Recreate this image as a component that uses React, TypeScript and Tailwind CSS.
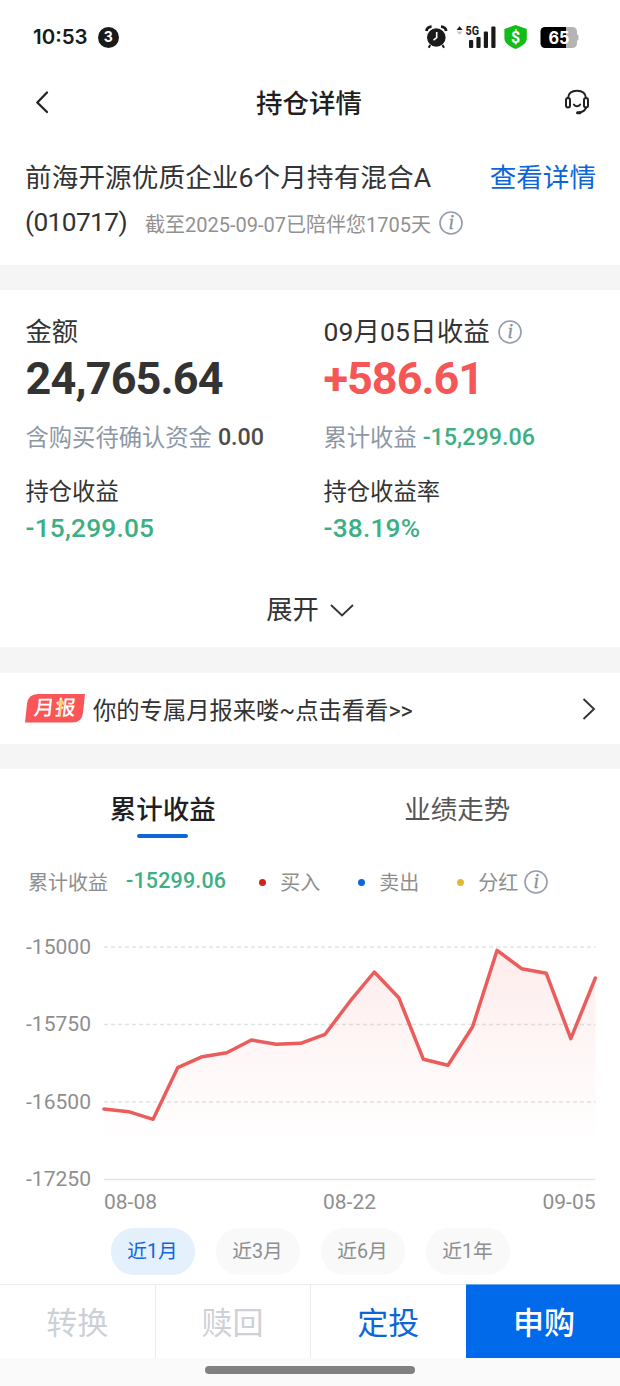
import React from 'react';
import clsx from 'clsx';

const PROFIT_POINTS = [
  1109, 1111.7, 1119.3, 1067.7, 1056.7, 1052.7, 1040, 1044.3, 1043.3, 1034.3, 1001.7,
  972, 997.7, 1059.3, 1065.3, 1026.7, 950.3, 968.7, 973.3, 1038.7, 978,
].map((y, i) => `${(104 + i * 24.57).toFixed(1)},${y - 920}`);

const AXIS = [
  { label: '-15000', y: 27 },
  { label: '-15750', y: 104.5 },
  { label: '-16500', y: 182 },
  { label: '-17250', y: 259.5 },
];

const LEGEND = [
  { label: '买入', dot: 'bg-[#c8281e]', left: 'ml-[33px]' },
  { label: '卖出', dot: 'bg-[#0f66d8]', left: 'ml-[38px]' },
  { label: '分红', dot: 'bg-[#e0b83c]', left: 'ml-[38px]' },
];

const RANGES = ['近1月', '近3月', '近6月', '近1年'];

const InfoIcon = ({ className }: { className?: string }) => (
  <svg viewBox="0 0 24 24" className={clsx('h-6 w-6 shrink-0', className)}>
    <circle cx="12" cy="12" r="11" fill="none" stroke="#939cab" strokeWidth="1.6" />
    <text x="12.2" y="18.3" textAnchor="middle" fontFamily="'Liberation Serif', serif" fontStyle="italic" fontSize="20" fill="#8791a1" stroke="#8791a1" strokeWidth="0.3">i</text>
  </svg>
);

const StatusBar = () => (
  <div className="flex h-[74px] items-center pl-[33px] pr-[36px]">
    <span className="font-[Inter] text-[20.5px] font-semibold leading-none text-[#1a1a1a]">10:53</span>
    <span className="ml-[10px] flex h-[21px] w-[21px] items-center justify-center rounded-full bg-[#1a1a1a] font-[Inter] text-[14px] font-bold leading-none text-white">3</span>
    <svg className="ml-auto h-[30px] w-[162px]" viewBox="422 22 162 30">
      {/* alarm */}
      <g fill="#1a1a1a">
        <circle cx="436.3" cy="37.5" r="9.3" />
        <path d="M426.4 31c.5-2.5 2.5-4.2 5.2-4.3M446.2 31c-.5-2.5-2.5-4.2-5.2-4.3" fill="none" stroke="#1a1a1a" strokeWidth="2.8" />
        <path d="M430.2 45l-1.5 2.8M442.5 45l1.5 2.8" stroke="#1a1a1a" strokeWidth="2" />
        <path d="M436.7 32v5.7l-3.2 2.5" fill="none" stroke="#fff" strokeWidth="1.6" />
      </g>
      {/* signal */}
      <path d="M456.6 30l3-3.8 3 3.8z" fill="#1a1a1a" />
      <path d="M456.6 31.5l3 3.3 3-3.3z" fill="#c4c4c4" />
      <text x="465.5" y="35" fontFamily="Roboto" fontSize="12" fontWeight="700" textLength="13.5" lengthAdjust="spacingAndGlyphs" fill="#1a1a1a">5G</text>
      <g fill="#1a1a1a">
        <rect x="469" y="40" width="4.2" height="8" rx="1" />
        <rect x="476.4" y="37" width="4.2" height="11" rx="1" />
        <rect x="483.8" y="31.5" width="4.2" height="16.5" rx="1" />
        <rect x="491.3" y="26.5" width="4.2" height="21.5" rx="1" />
      </g>
      {/* payment shield */}
      <path d="M515.6 25l11.2 4v9.5c0 4.8-6 8.6-11.2 10.5-5.2-1.9-11.2-5.7-11.2-10.5V29z" fill="#12bd19" />
      <text x="515.7" y="42.6" textAnchor="middle" fontFamily="Roboto" fontSize="16" fontWeight="700" fill="#fff">$</text>
      {/* battery */}
      <path d="M545 27h21v21h-21a4.5 4.5 0 0 1-4.5-4.5v-12a4.5 4.5 0 0 1 4.5-4.5z" fill="#000" />
      <path d="M566 27h6.500a4.5 4.5 0 0 1 4.5 4.5v2.5l1.5 1.5v4l-1.5 1.5v2.5a4.5 4.5 0 0 1-4.5 4.5h-6.500z" fill="#b4b4b4" />
      <text x="559" y="43.6" textAnchor="middle" fontFamily="Inter" fontSize="17.5" fontWeight="700" textLength="21" lengthAdjust="spacingAndGlyphs" fill="#fff">65</text>
    </svg>
  </div>
);

const Header = () => (
  <header className="flex h-14 items-center justify-between px-[30px]">
    <svg className="h-6 w-6" viewBox="0 0 24 24" fill="none" stroke="#222" strokeWidth="2.3" strokeLinecap="round" strokeLinejoin="round">
      <path d="M17 2.5L7.3 12.5l9.700 9.500" />
    </svg>
    <h1 className="pt-[4px] text-[26.5px] font-medium leading-none text-[#1f1f1f]">持仓详情</h1>
    <svg className="h-[26px] w-[26px]" viewBox="0 0 26 26" fill="none" stroke="#222" strokeWidth="2" strokeLinecap="round">
      <path d="M4 9C4.500 4.500 8 1.800 13 1.800s8.500 2.700 9 7.200" />
      <rect x="2" y="9" width="4" height="9.5" rx="2" />
      <rect x="20" y="9" width="4" height="9.5" rx="2" />
      <path d="M9.800 15.500c1.800 2.400 4.600 2.400 6.400 0M22 18.800c-1.200 2.800-3.200 4-6 4.400" />
      <path d="M13.500 23.700h2.500" strokeWidth="3" />
    </svg>
  </header>
);

const FundTitle = () => (
  <section className="flex h-[135px] flex-col pl-[25px] pr-6 pt-[24px] text-[#333]">
    <div className="flex h-[46px] items-center justify-between pt-[2px] text-[26.6px] leading-none">
      <span className="tracking-[0.1px]">前海开源优质企业6个月持有混合A</span>
      <span className="text-[#0c66d8]">查看详情</span>
    </div>
    <div className="flex h-[46px] items-center leading-none">
      <span className="pb-px text-[26.3px] tracking-[-0.6px]">(010717)</span>
      <span className="ml-[18px] pt-[3px] text-[20px] text-[#919191]">截至2025-09-07已陪伴您1705天</span>
      <InfoIcon className="ml-[8px]" />
    </div>
  </section>
);

const Summary = () => (
  <section className="h-[357px] px-[25.5px] pt-[21px] leading-none text-[#333]">
    <div className="grid grid-cols-[298px_1fr]">
      <div className="flex h-[42px] items-center text-[26.3px]">金额</div>
      <div className="flex h-[42px] items-center text-[26.5px]">
        <span className="tracking-[0.1px]">09月05日收益</span>
        <InfoIcon className="ml-[8px]" />
      </div>
      <div className="flex h-[50px] items-center text-[45px] font-bold tracking-[-0.85px]">24,765.64</div>
      <div className="flex h-[50px] items-center text-[45px] font-bold tracking-[-1px] text-[#f55656]">+586.61</div>
      <div className="flex h-[68px] items-center pt-px text-[23.3px] text-[#8e97a6]">
        <span className="pt-[2px]">含购买待确认资金</span>
        <span className="ml-[6px] pt-px font-medium text-[#4c4c4c]">0.00</span>
      </div>
      <div className="flex h-[68px] items-center pt-px text-[23.3px] text-[#8e97a6]">
        <span className="pt-[2px]">累计收益</span>
        <span className="ml-[6px] pt-px font-medium text-[#3cb083]">-15,299.06</span>
      </div>
      <div className="flex h-[42px] items-center pt-[2px] text-[23.3px]">持仓收益</div>
      <div className="flex h-[42px] items-center pt-[2px] text-[23.3px]">持仓收益率</div>
      <div className="flex h-[30px] items-center text-[26.3px] font-medium tracking-[0.2px] text-[#3cb083]">-15,299.05</div>
      <div className="flex h-[30px] items-center text-[26.3px] font-medium tracking-[0.2px] text-[#3cb083]">-38.19%</div>
    </div>
    <div className="mt-[48px] flex h-[36px] items-center justify-center text-[26.3px]">
      <span className="pt-[3px]">展开</span>
      <svg className="ml-[11px] mt-px h-4 w-6" viewBox="0 0 24 16" fill="none" stroke="#333" strokeWidth="1.8">
        <path d="M1 3l11 10.5L23 3" />
      </svg>
    </div>
  </section>
);

const ReportBadge = () => (
  <div className="relative flex h-[29px] w-[60px] items-center justify-center">
    <svg className="absolute inset-0 h-full w-full" viewBox="0 0 60 29">
      <path d="M13 0H60L58 19Q57 28.5 47 28.5H0L2 10Q3 0 13 0Z" fill="#fa5557" />
    </svg>
    <span className="relative -skew-x-6 text-[20.5px] font-medium leading-[29px] tracking-[0.8px] text-white">月报</span>
    <svg className="absolute inset-0 h-full w-full" viewBox="0 0 60 29" fill="none" stroke="#ffd070" strokeWidth="2">
      <path d="M32.5 11l4-4.5 2.5 4.500M36.400 8l-1.800 15" />
    </svg>
  </div>
);

const MonthlyReport = () => (
  <section className="flex h-[71px] items-center px-[25px] leading-none text-[#333]">
    <ReportBadge />
    <span className="ml-[8px] pt-[7px] text-[23.3px]">你的专属月报来喽~点击看看&gt;&gt;</span>
    <svg className="-mr-px ml-auto h-6 w-4" viewBox="0 0 16 24" fill="none" stroke="#333" strokeWidth="1.9">
      <path d="M3.5 2L14 12 3.5 22" />
    </svg>
  </section>
);

const ProfitChart = () => (
  <svg className="h-[297px] w-full" viewBox="0 0 620 297" fontFamily="Roboto" fontSize="20.3" fill="#8e8e8e">
    <defs>
      <linearGradient id="profit" x1="0" y1="30" x2="0" y2="259" gradientUnits="userSpaceOnUse">
        <stop offset="0" stopColor="#f55656" stopOpacity="0.11" />
        <stop offset="0.85" stopColor="#f55656" stopOpacity="0" />
      </linearGradient>
    </defs>
    {AXIS.map(({ label, y }, i) => (
      <g key={label}>
        <text x="26" y={y + 6.5} textLength="65" lengthAdjust="spacingAndGlyphs">{label}</text>
        <line
          x1="104"
          x2="595.5"
          y1={y}
          y2={y}
          stroke={i === 3 ? '#e5e5e5' : '#e3e3e3'}
          strokeWidth="1.5"
          strokeDasharray={i === 3 ? undefined : '4 3'}
        />
      </g>
    ))}
    <polygon points={`104,259 ${PROFIT_POINTS.join(' ')} 595.4,259`} fill="url(#profit)" />
    <polyline points={PROFIT_POINTS.join(' ')} fill="none" stroke="#eb5c5c" strokeWidth="3.5" strokeLinejoin="round" strokeLinecap="round" />
    <text x="104" y="289" textLength="53" lengthAdjust="spacingAndGlyphs">08-08</text>
    <text x="323" y="289" textLength="53" lengthAdjust="spacingAndGlyphs">08-22</text>
    <text x="542.5" y="289" textLength="53" lengthAdjust="spacingAndGlyphs">09-05</text>
  </svg>
);

const ProfitSection = () => (
  <section className="h-[515px] leading-none">
    <div className="flex h-[69px] px-[16px] pt-[24px] text-[26.5px]">
      <div className="flex flex-1 flex-col items-center">
        <span className="h-[32px] pt-px font-medium leading-[32px] text-[#1f1f1f]">累计收益</span>
        <span className="mt-[9px] h-[5px] w-[51px] rounded-full bg-[#0f66d8]" />
      </div>
      <span className="h-[32px] flex-1 pl-px pt-px text-center leading-[32px] text-[#555]">业绩走势</span>
    </div>
    <div className="flex h-[82px] items-center pl-[28px] pt-[6px] text-[20px] text-[#8e8e8e]">
      <span className="pt-px">累计收益</span>
      <span className="ml-[18px] pb-[2px] text-[21.5px] font-medium tracking-[0.15px] text-[#3cb083]">-15299.06</span>
      {LEGEND.map(({ label, dot, left }) => (
        <span key={label} className={clsx('flex items-center', left)}>
          <i className={clsx('mr-[14px] h-[7px] w-[7px] rounded-full', dot)} />
          <span className="pt-px">{label}</span>
        </span>
      ))}
      <InfoIcon className="ml-[6px]" />
    </div>
    <ProfitChart />
    <div className="mt-[11px] flex justify-center gap-[21px]">
      {RANGES.map((range, i) => (
        <button
          key={range}
          type="button"
          className={clsx(
            'h-[47px] w-[84px] rounded-[23px] pt-px text-[19.7px] leading-none',
            i === 0 ? 'bg-[#e5f0fd] text-[#0f66d8]' : 'bg-[#f9f9f9] text-[#8e8e8e]',
          )}
        >
          {range}
        </button>
      ))}
    </div>
  </section>
);

const BottomBar = () => (
  <footer className="h-[102px] bg-[#fafafa]">
    <div className="grid h-[74px] grid-cols-[155.5px_155px_155.5px_1fr] bg-white text-[31px] leading-none">
      <button type="button" className="border-r border-t border-[#ececec] pt-[4px] text-[#cdd1d7]">转换</button>
      <button type="button" className="border-r border-t border-[#ececec] pt-[4px] text-[#cdd1d7]">赎回</button>
      <button type="button" className="border-t border-[#ececec] pt-[4px] text-[#0c66d8]">定投</button>
      <button type="button" className="border-t border-[#6ba8f2] bg-[#006aeb] pt-[4px] pl-[2px] font-medium text-white">申购</button>
    </div>
    <div className="mx-auto mt-[8px] h-[8px] w-[210px] rounded-full bg-[#808080]" />
  </footer>
);

export default function App() {
  return (
    <main className="h-[1386px] w-[620px] overflow-hidden bg-white font-[Roboto,'Noto_Sans_CJK_SC',sans-serif]">
      <StatusBar />
      <Header />
      <FundTitle />
      <div className="h-[25px] bg-[#f5f5f5]" />
      <Summary />
      <div className="h-[26px] bg-[#f5f5f5]" />
      <MonthlyReport />
      <div className="h-[25px] bg-[#f5f5f5]" />
      <ProfitSection />
      <BottomBar />
    </main>
  );
}
